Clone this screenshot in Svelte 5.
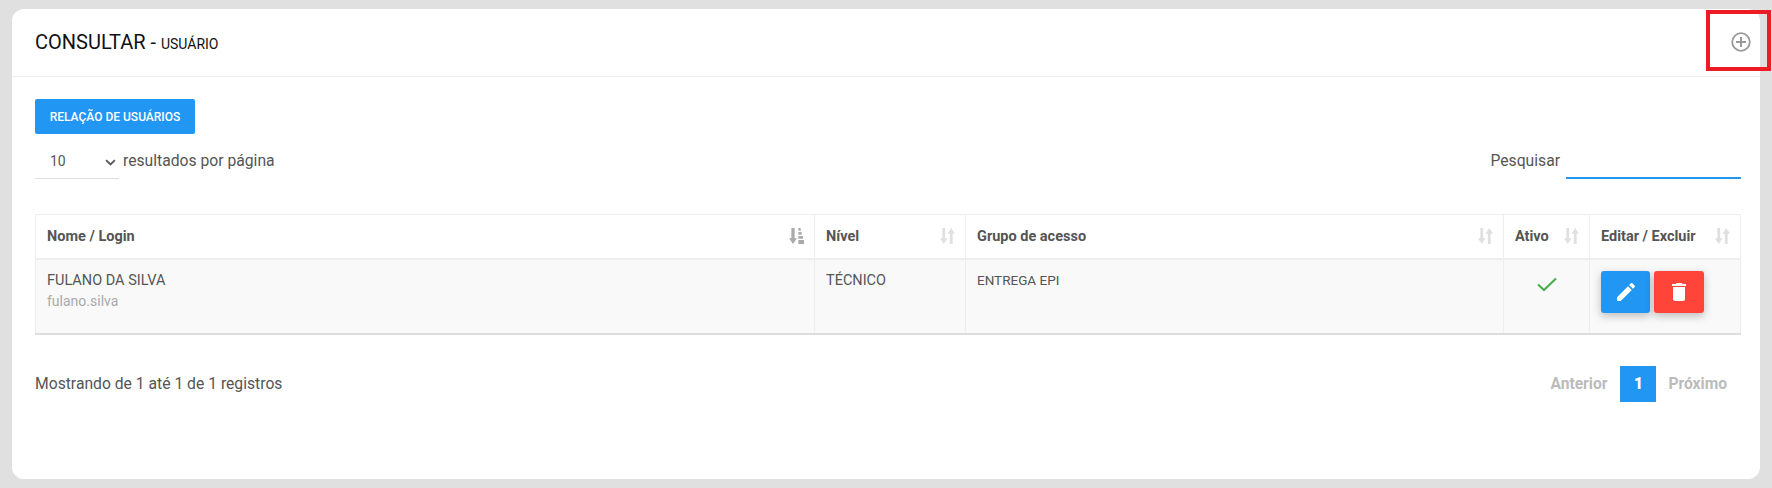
<script>
    const cols = [
        { label: 'Nome / Login', width: 779, active: true },
        { label: 'Nível', width: 151 },
        { label: 'Grupo de acesso', width: 538 },
        { label: 'Ativo', width: 86 },
        { label: 'Editar / Excluir', width: 151 }
    ];
</script>

<div class="page">
    <div class="card">
        <header class="head">
            <h2>CONSULTAR - <small>USUÁRIO</small></h2>
            <svg class="plus" viewBox="0 0 20 20" width="20" height="20" fill="none" stroke="#999" stroke-width="1.8">
                <circle cx="10" cy="10" r="8.8" />
                <path d="M10 5v10M5 10h10" stroke-width="2" />
            </svg>
        </header>

        <div class="body">
            <button class="report">RELAÇÃO DE USUÁRIOS</button>

            <div class="controls">
                <div class="length">
                    <div class="select">
                        <span>10</span>
                        <svg viewBox="0 0 12 8" width="11" height="7" fill="none" stroke="#555" stroke-width="2"><path d="M1 1.2l5 5 5-5" /></svg>
                    </div>
                    <span class="label">resultados por página</span>
                </div>
                <div class="search">
                    <span class="label">Pesquisar</span>
                    <div class="field"></div>
                </div>
            </div>

            <table>
                <thead>
                    <tr>
                        {#each cols as col}
                            <th style="width: {col.width}px">
                                <div class="th">
                                    <span>{col.label}</span>
                                    {#if col.active}
                                        <svg viewBox="0 0 16 14" width="15" height="16" preserveAspectRatio="none" fill="#aaa">
                                            <path d="M2.500 0h3.500v9h2.500l-4.250 5L0 9h2.500zM10 0h2.500v2.500H10zM10 3.500h3.500V6H10zM10 7h5v2.500h-5zM10 10.500h6V14h-6z" />
                                        </svg>
                                    {:else}
                                        <svg viewBox="0 0 16 14" width="15" height="16" preserveAspectRatio="none" fill="#e0e0e0">
                                            <path d="M2.500 0h3v9h2.500l-4 5-4-5h2.500zM10.500 14V5H8l4-5 4 5h-2.500v9z" />
                                        </svg>
                                    {/if}
                                </div>
                            </th>
                        {/each}
                    </tr>
                </thead>
                <tbody>
                    <tr>
                        <td>
                            <div class="name">FULANO DA SILVA</div>
                            <div class="login">fulano.silva</div>
                        </td>
                        <td>TÉCNICO</td>
                        <td class="group">ENTREGA EPI</td>
                        <td class="center">
                            <svg viewBox="0 0 20 14" width="20" height="15" fill="none" stroke="#4caf50" stroke-width="2.200"><path d="M1 7l6 5.500L19 1" /></svg>
                        </td>
                        <td class="actions">
                            <div class="btns">
                                <button class="action edit" aria-label="Editar">
                                    <svg viewBox="0 0 24 24" width="24" height="24" fill="#fff">
                                        <path d="M3 17.250V21h3.750L17.810 9.940l-3.750-3.750zM20.710 7.040a1 1 0 0 0 0-1.410l-2.340-2.340a1 1 0 0 0-1.410 0l-1.830 1.830 3.750 3.750z" />
                                    </svg>
                                </button>
                                <button class="action del" aria-label="Excluir">
                                    <svg viewBox="0 0 24 24" width="24" height="24" fill="#fff">
                                        <path d="M6 19a2 2 0 0 0 2 2h8a2 2 0 0 0 2-2V7H6zM19 4h-3.500l-1-1h-5l-1 1H5v2h14z" />
                                    </svg>
                                </button>
                            </div>
                        </td>
                    </tr>
                </tbody>
            </table>

            <div class="foot">
                <span class="label">Mostrando de 1 até 1 de 1 registros</span>
                <nav class="pages">
                    <span class="prev">Anterior</span>
                    <b>1</b>
                    <span>Próximo</span>
                </nav>
            </div>
        </div>
    </div>
    <div class="mark"></div>
</div>

<style>
    :global(body) {
        margin: 0;
        background: #e0e0e0;
    }

    .page {
        position: relative;
        height: 488px;
        box-sizing: border-box;
        padding: 9px 12px;
        font-family: Roboto, sans-serif;
        color: #555;
        overflow: hidden;
    }

    .card {
        height: 470px;
        background: #fff;
        border-radius: 12px;
    }

    .head {
        height: 68px;
        box-sizing: border-box;
        border-bottom: 1px solid #eee;
        padding: 0 9px 1px 23px;
        display: flex;
        align-items: center;
        justify-content: space-between;
    }

    h2 {
        margin: 0;
        font-size: 20px;
        font-weight: 400;
        color: #111;
    }

    small {
        font-size: 14px;
    }

    .body {
        padding: 22px 19px 0 23px;
    }

    .report {
        display: block;
        width: 160px;
        height: 35px;
        border: 0;
        border-radius: 2px;
        padding: 0;
        background: #2196f3;
        color: #fff;
        font: 500 12px Roboto, sans-serif;
    }

    .controls {
        display: flex;
        justify-content: space-between;
        height: 44px;
    }

    .length, .search {
        display: flex;
        align-items: flex-start;
    }

    .label {
        font-size: 15.700px;
        line-height: 18px;
        margin-top: 18px;
    }

    .select {
        width: 84px;
        height: 45px;
        box-sizing: border-box;
        border-bottom: 1px solid #ddd;
        padding: 19px 3px 0 15px;
        margin-right: 4px;
        display: flex;
        justify-content: space-between;
        font-size: 14px;
    }

    .select svg {
        margin-top: 6px;
    }

    .field {
        width: 175px;
        height: 45px;
        box-sizing: border-box;
        border-bottom: 2px solid #2196f3;
        margin-left: 6px;
    }

    table {
        width: 1706px;
        margin-top: 36px;
        border-collapse: collapse;
        table-layout: fixed;
        font-size: 14.500px;
    }

    th, td {
        border: 1px solid #eee;
        padding: 0 10px 0 11px;
        text-align: left;
        vertical-align: top;
    }

    th {
        height: 44px;
        box-sizing: border-box;
        border-bottom-width: 2px;
        font-size: 14.500px;
        font-weight: 700;
        vertical-align: middle;
    }

    .th {
        display: flex;
        justify-content: space-between;
        align-items: center;
    }

    td {
        height: 75px;
        box-sizing: border-box;
        padding-top: 11px;
        background: #f9f9f9;
        line-height: 20px;
        border-bottom: 2px solid #ddd;
    }

    .login {
        font-size: 14px;
        color: #aaa;
    }

    .group {
        font-size: 13.500px;
        line-height: 18px;
    }

    .center {
        text-align: center;
        padding: 17px 11px 0;
    }

    .actions {
        padding-top: 11px;
    }

    .btns {
        display: flex;
        gap: 4px;
    }

    .action {
        width: 50px;
        height: 42px;
        border: 0;
        border-radius: 3px;
        padding: 0;
        box-shadow: 0 3px 8px rgba(0, 0, 0, .25);
    }

    .action svg {
        display: block;
        margin: auto;
    }

    .edit {
        background: #2196f3;
        width: 49px;
    }

    .del {
        background: #ff453a;
    }

    .foot {
        display: flex;
        justify-content: space-between;
        align-items: center;
        margin-top: 31px;
    }

    .foot .label {
        margin-top: 0;
    }

    .pages {
        display: flex;
        align-items: center;
        gap: 12px;
        padding-right: 14px;
        font-size: 15.600px;
        font-weight: 700;
        color: #bbb;
    }

    .prev {
        margin-right: 1px;
    }

    .pages b {
        width: 36px;
        height: 36px;
        line-height: 36px;
        text-align: center;
        background: #2196f3;
        color: #fff;
    }

    .mark {
        position: absolute;
        left: 1706px;
        top: 10px;
        width: 65px;
        height: 61px;
        box-sizing: border-box;
        border: 4px solid #ed1c24;
    }
</style>
